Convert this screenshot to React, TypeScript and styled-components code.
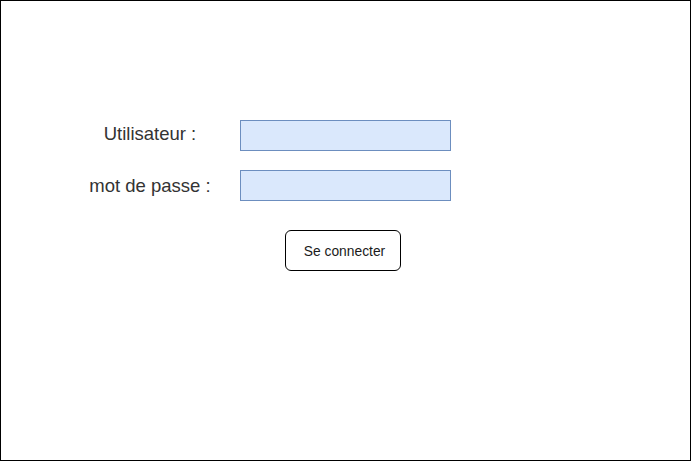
import React from "react";
import styled, { createGlobalStyle } from "styled-components";

const Global = createGlobalStyle`
  html, body { margin: 0; padding: 0; background: #fff; }
  body { font-family: "Liberation Sans", Arial, sans-serif; }
`;

const Frame = styled.div`
  box-sizing: border-box;
  width: 691px;
  height: 461px;
  border: 1px solid #000;
  background: #fff;
  padding: 119px 0 0 89px;
`;

const Form = styled.form`
  display: grid;
  grid-template-columns: 120px 211px;
  column-gap: 30px;
  row-gap: 19px;
  align-items: center;
`;

const Label = styled.label<{ $lift?: number }>`
  box-sizing: border-box;
  height: 31px;
  display: flex;
  align-items: center;
  justify-content: center;
  padding-bottom: ${(p) => (p.$lift ?? 0) * 2}px;
  font-size: 18.5px;
  color: #333;
  white-space: nowrap;
`;

const Field = styled.input`
  box-sizing: border-box;
  width: 211px;
  height: 31px;
  margin: 0;
  border: 1px solid #6c8ebf;
  background: #dae8fc;
  outline: none;
`;

const ButtonRow = styled.div`
  display: flex;
  padding: 29px 0 0 195px;
`;

const Button = styled.button`
  box-sizing: border-box;
  width: 116px;
  height: 41px;
  border: 1px solid #000;
  border-radius: 6px;
  background: #fff;
  font-family: "Liberation Sans", Arial, sans-serif;
  font-size: 13.8px;
  color: #1a1a1a;
  padding: 2px 0 0 3px;
  cursor: pointer;
`;

export default function App() {
  return (
    <>
      <Global />
      <Frame>
        <Form onSubmit={(e) => e.preventDefault()}>
          <Label htmlFor="user" $lift={2}>Utilisateur :</Label>
          <Field id="user" type="text" />
          <Label htmlFor="pass">mot de passe :</Label>
          <Field id="pass" type="password" />
        </Form>
        <ButtonRow>
          <Button type="submit">Se connecter</Button>
        </ButtonRow>
      </Frame>
    </>
  );
}
